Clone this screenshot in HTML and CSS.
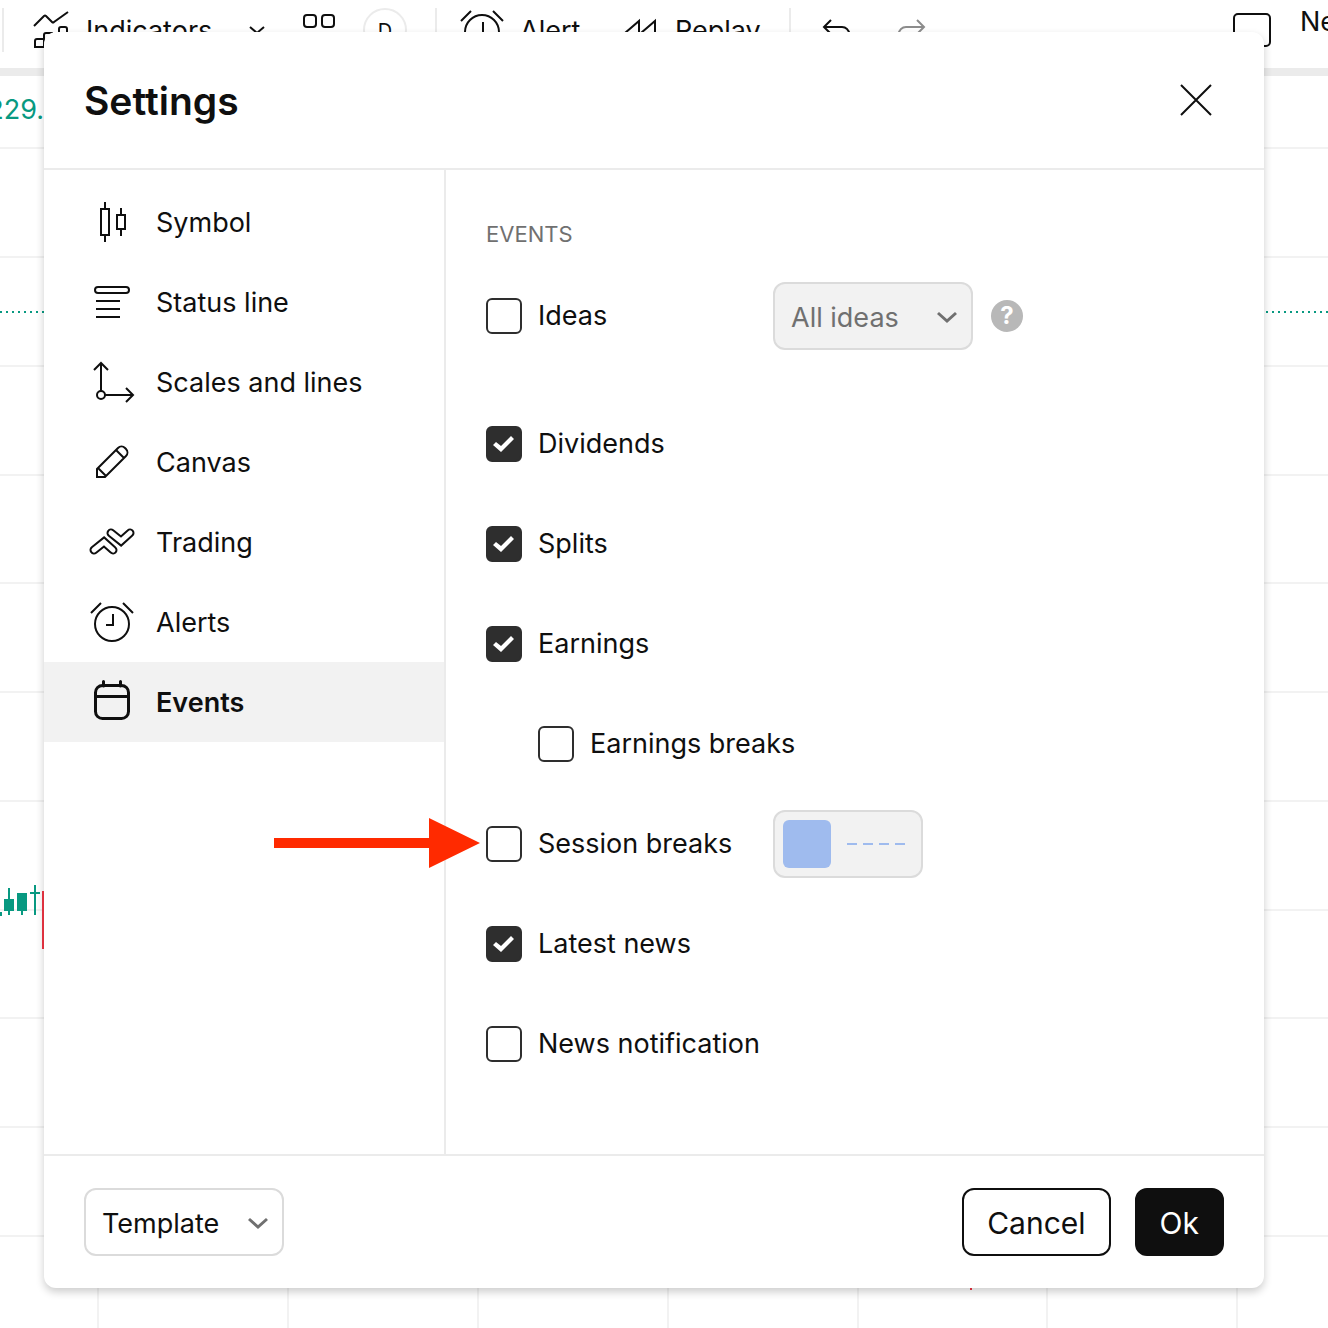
FILE: index.html
```
<!DOCTYPE html>
<html lang="en">
<head>
<meta charset="utf-8">
<meta name="viewport" content="width=device-width, initial-scale=1">
<title>Chart settings</title>
<link rel="stylesheet" href="styles.css">
</head>
<body>
<div class="app">
  <header class="toolbar">
    <span class="divider"></span>
    <button class="tool tool-indicators" type="button">
      <svg class="icon" viewBox="0 0 56 56" aria-hidden="true"><path d="M10 24 20 14q1-1 2 0l6 6q1 1 2 0L44 10M11 45v-6q0-2 2-2h7v8zM20 45V33q0-2 2-2h6v14zM35 45V27q0-2 2-2h4q2 0 2 2v18z"/></svg>
      <span>Indicators</span>
    </button>
    <button class="tool tool-more" type="button" aria-label="Favorite indicators">
      <svg class="icon-small" viewBox="0 0 20 20" aria-hidden="true"><path d="m3 7 7 6 7-6"/></svg>
    </button>
    <button class="tool tool-templates" type="button" aria-label="Indicator templates">
      <svg class="icon-medium" viewBox="0 0 32 32" aria-hidden="true"><rect x="1" y="1" width="12" height="12" rx="3"/><rect x="19" y="1" width="12" height="12" rx="3"/><rect x="1" y="19" width="12" height="12" rx="3"/><rect x="19" y="19" width="12" height="12" rx="3"/></svg>
    </button>
    <button class="tool interval" type="button">D</button>
    <span class="divider"></span>
    <button class="tool tool-alert" type="button">
      <svg class="icon" viewBox="0 0 56 56" aria-hidden="true"><circle cx="28" cy="30" r="17"/><path d="M29 20v11h-7M7 19 17 9M49 19 39 9"/></svg>
      <span>Alert</span>
    </button>
    <button class="tool tool-replay" type="button">
      <svg class="icon" viewBox="0 0 56 56" aria-hidden="true"><path d="M27 19v24L13 31zM43 19v24L29 31z"/></svg>
      <span>Replay</span>
    </button>
    <span class="divider"></span>
    <button class="tool tool-undo" type="button" aria-label="Undo">
      <svg class="icon" viewBox="0 0 56 56" aria-hidden="true"><path d="m19 18-7 7 7 7M12 25h18q6 0 8 8v5"/></svg>
    </button>
    <button class="tool tool-redo" type="button" aria-label="Redo" disabled>
      <svg class="icon" viewBox="0 0 56 56" aria-hidden="true"><path d="m37 18 7 7-7 7M44 25H26q-6 0-8 8v5"/></svg>
    </button>
    <span class="spacer"></span>
    <button class="tool tool-layout" type="button">
      <svg class="icon-layout" viewBox="0 0 38 34" aria-hidden="true"><rect x="1" y="1" width="36" height="32" rx="4"/></svg>
      <span class="layout-name">Ne</span>
    </button>
  </header>

  <main class="chart">
    <svg class="plot" aria-hidden="true">
      <g class="grid-lines">
        <rect y="71" width="100%" height="2"/><rect y="180" width="100%" height="2"/><rect y="289" width="100%" height="2"/><rect y="398" width="100%" height="2"/><rect y="506" width="100%" height="2"/><rect y="615" width="100%" height="2"/><rect y="724" width="100%" height="2"/><rect y="833" width="100%" height="2"/><rect y="941" width="100%" height="2"/><rect y="1050" width="100%" height="2"/><rect y="1159" width="100%" height="2"/>
        <rect x="97" width="2" height="100%"/><rect x="287" width="2" height="100%"/><rect x="477" width="2" height="100%"/><rect x="667" width="2" height="100%"/><rect x="857" width="2" height="100%"/><rect x="1046" width="2" height="100%"/><rect x="1236" width="2" height="100%"/>
      </g>
      <line class="price-line" x1="0" x2="100%" y1="236" y2="236"/>
      <path class="candle-up" d="M0 836h2v4H0zM8 812h2v11h4v12h-4v4H8v-4H4v-12h4zM17 817h10v18h-4v4h-2v-4h-4zM34 809h2v7h4v2h-4v21h-2v-21h-4v-2h4z"/>
      <path class="candle-down" d="M42 815h2v58h-2zM970 1208h2v6h-2z"/>
    </svg>
    <div class="legend"><span>229.</span></div>
  </main>
</div>

<section class="dialog" role="dialog" aria-labelledby="dialog-title">
  <header class="dialog-header">
    <h1 id="dialog-title">Settings</h1>
    <button class="close" type="button" aria-label="Close">
      <svg class="icon" viewBox="0 0 56 56" aria-hidden="true"><path d="m13 13 30 30M43 13 13 43"/></svg>
    </button>
  </header>

  <div class="dialog-body">
    <nav class="tabs" aria-label="Settings sections">
      <a class="tab" href="#symbol">
        <svg class="icon" viewBox="0 0 56 56" aria-hidden="true"><rect x="17" y="15" width="8" height="26"/><rect x="33" y="21" width="8" height="14"/><path d="M21 8v6M21 42v6M37 14v6M37 36v6"/></svg>
        <span>Symbol</span>
      </a>
      <a class="tab" href="#status-line">
        <svg class="icon" viewBox="0 0 56 56" aria-hidden="true"><rect x="11" y="13" width="34" height="6" rx="3"/><path d="M12 27h24M12 35h24M12 43h24"/></svg>
        <span>Status line</span>
      </a>
      <a class="tab" href="#scales">
        <svg class="icon" viewBox="0 0 56 56" aria-hidden="true"><circle cx="17" cy="41" r="4"/><path d="M17 37V10M10 16l7-7 7 7M21 41h27M42 34l7 7-7 7"/></svg>
        <span>Scales and lines</span>
      </a>
      <a class="tab" href="#canvas">
        <svg class="icon" viewBox="0 0 56 56" aria-hidden="true"><path d="M13 35v8h8l21-21a5 5 0 0 0 0-7l-1-1a5 5 0 0 0-7 0zM32 16l8 8M14 34l8 8"/></svg>
        <span>Canvas</span>
      </a>
      <a class="tab" href="#trading">
        <svg class="icon icon-trading" viewBox="0 0 56 56" aria-hidden="true"><g class="ribbon"><path d="m10 36 10-8 9 8"/><path d="m27 19 10 8 9-8"/></g><g class="ribbon-fill"><path d="m10 36 10-8 9 8"/><path d="m27 19 10 8 9-8"/></g></svg>
        <span>Trading</span>
      </a>
      <a class="tab" href="#alerts">
        <svg class="icon" viewBox="0 0 56 56" aria-hidden="true"><circle cx="28" cy="30" r="17"/><path d="M29 20v11h-7M7 19 17 9M49 19 39 9"/></svg>
        <span>Alerts</span>
      </a>
      <a class="tab tab-active" href="#events" aria-current="page">
        <svg class="icon icon-bold" viewBox="0 0 56 56" aria-hidden="true"><rect x="11.500" y="11.500" width="33" height="33" rx="7"/><path d="M12 22.500h32M19.500 7.500V12M36.500 7.500V12"/></svg>
        <span>Events</span>
      </a>
    </nav>

    <form class="panel" id="events">
      <h2>EVENTS</h2>
      <div class="row row-first">
        <label class="option"><input type="checkbox"><span>Ideas</span></label>
        <div class="controls">
          <div class="select">
            <select aria-label="Ideas shown" disabled><option>All ideas</option></select>
            <svg class="caret" viewBox="0 0 24 24" aria-hidden="true"><path d="m3 9 9 8 9-8"/></svg>
          </div>
          <button class="help" type="button" aria-label="Help">?</button>
        </div>
      </div>
      <div class="row"><label class="option"><input type="checkbox" checked><span>Dividends</span></label></div>
      <div class="row"><label class="option"><input type="checkbox" checked><span>Splits</span></label></div>
      <div class="row"><label class="option"><input type="checkbox" checked><span>Earnings</span></label></div>
      <div class="row row-nested"><label class="option"><input type="checkbox"><span>Earnings breaks</span></label></div>
      <div class="row">
        <label class="option"><input type="checkbox"><span>Session breaks</span></label>
        <div class="controls">
          <button class="line-style" type="button" aria-label="Session break line style" disabled>
            <span class="swatch"></span>
            <svg class="dashes" viewBox="0 0 58 2" aria-hidden="true"><path d="M0 1h58"/></svg>
          </button>
        </div>
        <svg class="pointer" viewBox="0 0 206 50" aria-hidden="true"><path d="M0 20h155V0l51 25-51 25V30H0z"/></svg>
      </div>
      <div class="row"><label class="option"><input type="checkbox" checked><span>Latest news</span></label></div>
      <div class="row"><label class="option"><input type="checkbox"><span>News notification</span></label></div>
    </form>
  </div>

  <footer class="dialog-footer">
    <div class="select">
      <select aria-label="Template"><option>Template</option></select>
      <svg class="caret" viewBox="0 0 24 24" aria-hidden="true"><path d="m3 9 9 8 9-8"/></svg>
    </div>
    <div class="actions">
      <button class="button" type="button">Cancel</button>
      <button class="button button-primary" type="button">Ok</button>
    </div>
  </footer>
</section>
</body>
</html>
```
FILE: styles.css
```
* {
  box-sizing: border-box;
}

body {
  position: relative;
  margin: 0;
  overflow-x: hidden;
  background: #fff;
  color: #0f0f0f;
  font-family: Inter, "Liberation Sans", sans-serif;
  font-size: 27px;
  line-height: 36px;
}

button,
select {
  margin: 0;
  padding: 0;
  border: 0;
  background: none;
  color: inherit;
  font: inherit;
}

svg {
  flex: none;
  fill: none;
  stroke: currentColor;
  stroke-width: 2;
}

.icon {
  width: 56px;
  height: 56px;
}

/* Chart page */

.app {
  overflow: hidden;
}

.toolbar {
  display: flex;
  align-items: center;
  height: 76px;
  padding: 0 0 8px 2px;
  border-bottom: 8px solid #ebebeb;
  overflow: hidden;
  white-space: nowrap;
}

.divider {
  flex: none;
  width: 2px;
  height: 44px;
  background: #ebebeb;
}

.spacer {
  flex: 1;
}

.tool {
  display: flex;
  flex: none;
  align-items: center;
}

.tool span {
  padding-top: 2px;
}

.tool:disabled {
  color: #8c8c8c;
}

.tool-indicators {
  gap: 6px;
  width: 212px;
  padding-left: 20px;
}

.tool-more {
  width: 56px;
  padding-left: 31px;
}

.icon-small {
  width: 20px;
  height: 20px;
}

.tool-templates {
  width: 91px;
  padding-left: 31px;
}

.icon-medium {
  width: 32px;
  height: 32px;
}

.interval {
  justify-content: center;
  width: 44px;
  height: 44px;
  margin-right: 28px;
  padding-top: 2px;
  border: 2px solid #ebebeb;
  border-radius: 50%;
  font-size: 20px;
}

.tool-alert {
  gap: 10px;
  width: 175px;
  padding-left: 17px;
}

.tool-replay {
  gap: 7px;
  width: 177px;
}

.tool-undo {
  width: 89px;
  padding-left: 21px;
}

.tool-layout {
  gap: 29px;
  width: 95px;
}

.icon-layout {
  width: 38px;
  height: 34px;
}

.tool .layout-name {
  padding: 0 0 16px;
}

.chart {
  display: grid;
}

.plot,
.legend {
  grid-area: 1 / 1;
}

.plot {
  width: 100%;
  height: 1252px;
  stroke: none;
}

.grid-lines {
  fill: #f2f2f2;
}

.price-line {
  stroke: #089981;
  stroke-dasharray: 2 4;
}

.candle-up {
  fill: #089981;
}

.candle-down {
  fill: #f23645;
}

.legend {
  display: flex;
  justify-content: flex-end;
  width: 44px;
  padding-top: 16px;
  color: #089981;
}

/* Settings dialog */

.dialog {
  position: absolute;
  top: 32px;
  right: 64px;
  left: 44px;
  border-radius: 12px;
  background: #fff;
  box-shadow: 0 4px 8px rgba(0, 0, 0, 0.2);
}

.dialog-header {
  display: flex;
  align-items: center;
  justify-content: space-between;
  height: 138px;
  padding: 0 40px;
  border-bottom: 2px solid #ebebeb;
}

h1 {
  margin: 0;
  padding-top: 2px;
  font-size: 39px;
  font-weight: 600;
  line-height: 48px;
}

.close {
  display: flex;
}

.dialog-body {
  display: flex;
}

.tabs {
  flex: none;
  width: 402px;
  padding: 12px 0;
  border-right: 2px solid #ebebeb;
}

.tab {
  display: flex;
  align-items: center;
  gap: 16px;
  height: 80px;
  padding: 0 40px;
  color: inherit;
  text-decoration: none;
}

.tab span {
  padding-top: 2px;
}

.tab-active {
  background: #f2f2f2;
  font-weight: 600;
}

.icon-bold {
  stroke-width: 3;
  stroke-linecap: round;
}

.ribbon {
  stroke-width: 9;
  stroke-linecap: round;
}

.ribbon-fill {
  stroke: #fff;
  stroke-width: 5;
  stroke-linecap: round;
}

.panel {
  display: flex;
  flex: 1;
  flex-direction: column;
  gap: 32px;
  padding: 48px 40px 76px;
}

h2 {
  margin: 0;
  color: #707070;
  font-size: 22px;
  font-weight: 400;
  line-height: 32px;
}

.row {
  position: relative;
  display: grid;
  grid-template-columns: 287px 1fr;
  align-items: center;
  min-height: 68px;
}

.row-first {
  margin-bottom: 28px;
}

.row-nested {
  grid-template-columns: 1fr;
  padding-left: 52px;
}

.option {
  display: flex;
  align-items: center;
  gap: 16px;
}

.option input {
  flex: none;
  width: 36px;
  height: 36px;
  margin: 0;
  border: 2px solid #2e2e2e;
  border-radius: 6px;
  appearance: none;
}

.option input:checked {
  background: #2e2e2e;
}

.option input:checked::before {
  display: block;
  width: 32px;
  height: 32px;
  background: #fff;
  clip-path: polygon(5px 17px, 8px 14px, 13px 18px, 23px 8px, 26px 11px, 13px 24px);
  content: "";
}

.controls {
  display: flex;
  align-items: center;
  gap: 18px;
}

.select {
  display: grid;
  align-items: center;
  width: 200px;
}

.select select,
.caret {
  grid-area: 1 / 1;
}

.select select {
  width: 100%;
  height: 68px;
  padding: 4px 16px 0;
  border: 2px solid #dbdbdb;
  border-radius: 12px;
  appearance: none;
}

.select select:disabled {
  background: #f2f2f2;
  color: #707070;
  opacity: 1;
}

.caret {
  justify-self: end;
  width: 24px;
  height: 24px;
  margin-right: 14px;
  color: #707070;
  stroke-width: 3;
  pointer-events: none;
}

.help {
  width: 32px;
  height: 32px;
  border-radius: 50%;
  background: #b8b8b8;
  color: #fff;
  font-size: 24px;
  font-weight: 700;
  line-height: 32px;
  text-align: center;
}

.line-style {
  display: flex;
  align-items: center;
  gap: 16px;
  width: 150px;
  height: 68px;
  padding: 0 8px;
  border: 2px solid #dbdbdb;
  border-radius: 12px;
  background: #f2f2f2;
}

.swatch {
  width: 48px;
  height: 48px;
  border-radius: 6px;
  background: #9fbbee;
}

.dashes {
  width: 58px;
  height: 2px;
  stroke: #9fbbee;
  stroke-dasharray: 10 6;
}

.pointer {
  position: absolute;
  top: 8px;
  left: -212px;
  width: 206px;
  height: 50px;
  fill: #ff2a00;
  stroke: none;
}

.dialog-footer {
  display: flex;
  align-items: center;
  justify-content: space-between;
  padding: 32px 40px;
  border-top: 2px solid #ebebeb;
}

.actions {
  display: flex;
  gap: 24px;
}

.button {
  height: 68px;
  padding: 2px 23px 0;
  border: 2px solid #0f0f0f;
  border-radius: 12px;
  font-size: 30px;
}

.button-primary {
  background: #0f0f0f;
  color: #fff;
}
```
